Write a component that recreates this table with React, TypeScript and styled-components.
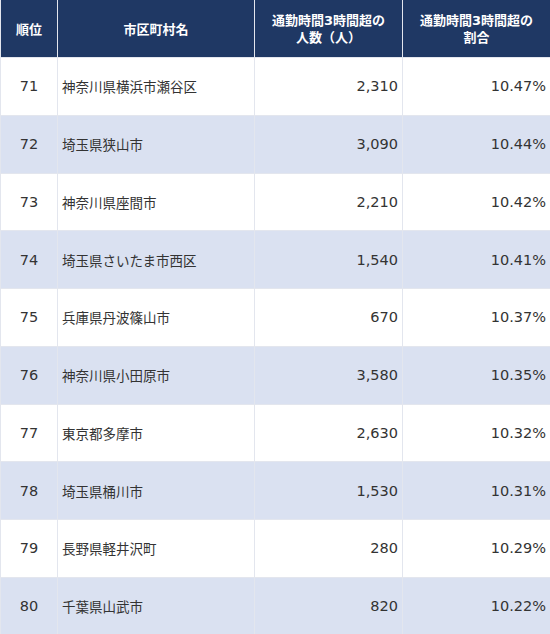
import React from 'react';
import styled, { createGlobalStyle } from 'styled-components';

const GlobalStyle = createGlobalStyle`
  html, body {
    margin: 0;
    padding: 0;
    background: #ffffff;
  }
  body {
    font-family: "DejaVu Sans", "Noto Sans CJK JP", sans-serif;
    color: #333333;
  }
`;

const Table = styled.table`
  width: 550px;
  border-collapse: collapse;
  table-layout: fixed;
`;

const HeadCell = styled.th`
  background: #1f3864;
  color: #ffffff;
  font-family: "Noto Sans CJK JP", sans-serif;
  font-size: 13px;
  font-weight: 700;
  height: 57px;
  padding: 0 2px;
  line-height: 16px;
  text-align: center;
  border: 1px solid #e3e6ee;
  border-top: none;
`;

const Digit = styled.span`
  font-family: "DejaVu Sans", sans-serif;
  font-weight: 600;
`;

const Row = styled.tr<{ $striped: boolean }>`
  height: 57.75px;
  background: ${p => (p.$striped ? '#dae1f1' : '#ffffff')};
`;

const Cell = styled.td`
  border: 1px solid #e3e6ee;
  color: #333333;
  white-space: nowrap;
  padding: 0 4px;
`;

const RankCell = styled(Cell)`
  text-align: center;
  font-family: "DejaVu Sans", sans-serif;
  font-size: 14.5px;
`;

const NameCell = styled(Cell)`
  text-align: left;
  font-family: "Noto Sans CJK JP", sans-serif;
  font-size: 13.5px;
`;

const NumCell = styled(Cell)`
  text-align: right;
  font-family: "DejaVu Sans", sans-serif;
  font-size: 14.5px;
`;

const rows = [
  [71, '神奈川県横浜市瀬谷区', '2,310', '10.47%'],
  [72, '埼玉県狭山市', '3,090', '10.44%'],
  [73, '神奈川県座間市', '2,210', '10.42%'],
  [74, '埼玉県さいたま市西区', '1,540', '10.41%'],
  [75, '兵庫県丹波篠山市', '670', '10.37%'],
  [76, '神奈川県小田原市', '3,580', '10.35%'],
  [77, '東京都多摩市', '2,630', '10.32%'],
  [78, '埼玉県桶川市', '1,530', '10.31%'],
  [79, '長野県軽井沢町', '280', '10.29%'],
  [80, '千葉県山武市', '820', '10.22%'],
];

export default function App() {
  return (
    <>
      <GlobalStyle />
      <Table>
        <colgroup>
          <col style={{ width: 57 }} />
          <col style={{ width: 197 }} />
          <col style={{ width: 148 }} />
          <col style={{ width: 148 }} />
        </colgroup>
        <thead>
          <tr>
            <HeadCell>順位</HeadCell>
            <HeadCell>市区町村名</HeadCell>
            <HeadCell>通勤時間<Digit>3</Digit>時間超の<br />人数（人）</HeadCell>
            <HeadCell>通勤時間<Digit>3</Digit>時間超の<br />割合</HeadCell>
          </tr>
        </thead>
        <tbody>
          {rows.map((r, i) => (
            <Row key={r[0]} $striped={i % 2 === 1}>
              <RankCell>{r[0]}</RankCell>
              <NameCell>{r[1]}</NameCell>
              <NumCell>{r[2]}</NumCell>
              <NumCell>{r[3]}</NumCell>
            </Row>
          ))}
        </tbody>
      </Table>
    </>
  );
}
